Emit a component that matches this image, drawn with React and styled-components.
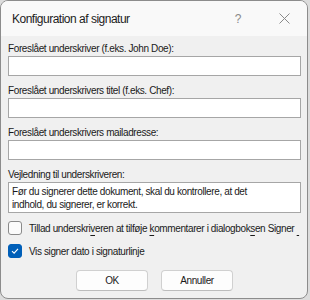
import styled, { createGlobalStyle } from "styled-components";

const Global = createGlobalStyle`
  html, body {
    margin: 0;
    padding: 0;
    background: #dcdcdc;
  }
  body {
    font-family: "Liberation Sans", Arial, sans-serif;
    color: #1a1a1a;
    letter-spacing: -0.38px;
  }
`;

const Window = styled.div`
  box-sizing: border-box;
  width: 308px;
  height: 299px;
  border: 1px solid #8c8c8c;
  border-radius: 8px;
  background: #f0f0f0;
  overflow: hidden;
  display: flex;
  flex-direction: column;
`;

const TitleBar = styled.div`
  height: 35px;
  background: #f9f9f9;
  display: flex;
  align-items: center;
  padding-left: 11px;
  flex-shrink: 0;
`;

const Title = styled.div`
  flex: 1;
  font-size: 12px;
  letter-spacing: -0.5px;
  color: #1c1c1c;
`;

const TitleButton = styled.div`
  width: 46px;
  height: 30px;
  display: flex;
  align-items: center;
  justify-content: center;
  color: #8a8a8a;
  font-size: 12px;
`;

const Body = styled.div`
  padding: 7px 6px 0 7px;
  display: flex;
  flex-direction: column;
`;

const Field = styled.div`
  display: flex;
  flex-direction: column;
  margin-bottom: 9px;
`;

const Label = styled.label`
  font-size: 10px;
  line-height: 12px;
  margin-bottom: 1px;
  color: #1a1a1a;
`;

const Input = styled.div`
  box-sizing: border-box;
  height: 20px;
  background: #fff;
  border: 1px solid #a6a6a6;
`;

const TextArea = styled.div`
  box-sizing: border-box;
  height: 31px;
  background: #fff;
  border: 1px solid #a6a6a6;
  padding: 3px 3px;
  font-size: 10px;
  line-height: 12.5px;
  color: #1a1a1a;
`;

const CheckRow = styled.div`
  display: flex;
  align-items: center;
  gap: 7px;
  height: 14px;
  margin-top: ${(p) => p.$top}px;
  font-size: 10px;
  white-space: nowrap;
`;

const Box = styled.div`
  box-sizing: border-box;
  width: 14px;
  height: 14px;
  border-radius: 3px;
  flex-shrink: 0;
  display: flex;
  align-items: center;
  justify-content: center;
  border: 1px solid ${(p) => (p.$checked ? "#005fb8" : "#8a8a8a")};
  background: ${(p) => (p.$checked ? "#005fb8" : "#fbfbfb")};
`;

const Key = styled.span`
  text-decoration: underline;
  text-underline-offset: 3px;
  text-decoration-color: #1a1a1a;
`;

const Buttons = styled.div`
  display: flex;
  justify-content: center;
  gap: 13px;
  margin-top: 12px;
`;

const Button = styled.div`
  box-sizing: border-box;
  width: 72px;
  height: 21px;
  background: #fdfdfd;
  border: 1px solid #d0d0d0;
  border-bottom-color: #bcbcbc;
  border-radius: 4px;
  font-size: 10px;
  display: flex;
  align-items: center;
  justify-content: center;
  color: #1a1a1a;
`;

export default function App() {
  return (
    <>
      <Global />
      <Window>
        <TitleBar>
          <Title>Konfiguration af signatur</Title>
          <TitleButton>?</TitleButton>
          <TitleButton>
            <svg width="11" height="11" viewBox="0 0 11 11">
              <path d="M0.5 0.5 L10.5 10.5 M10.5 0.5 L0.5 10.5" stroke="#8a8a8a" strokeWidth="1" />
            </svg>
          </TitleButton>
        </TitleBar>
        <Body>
          <Field>
            <Label>Foreslået underskriver (f.eks. John Doe):</Label>
            <Input />
          </Field>
          <Field>
            <Label>Foreslået underskrivers titel (f.eks. Chef):</Label>
            <Input />
          </Field>
          <Field>
            <Label>Foreslået underskrivers mailadresse:</Label>
            <Input />
          </Field>
          <Field>
            <Label>Vejledning til underskriveren:</Label>
            <TextArea>
              Før du signerer dette dokument, skal du kontrollere, at det
              <br />
              indhold, du signerer, er korrekt.
            </TextArea>
          </Field>
          <CheckRow $top={-1}>
            <Box />
            <span>
              Tillad underskri<Key>v</Key>eren at tilføje <Key>k</Key>ommentarer i dialogbok<Key>s</Key>en Signer <Key>&nbsp;</Key>
            </span>
          </CheckRow>
          <CheckRow $top={9}>
            <Box $checked>
              <svg width="10" height="10" viewBox="0 0 10 10">
                <path d="M2 5.2 L4.1 7.2 L8 2.8" stroke="#fff" strokeWidth="1.1" fill="none" />
              </svg>
            </Box>
            <span>Vis signer dato i signaturlinje</span>
          </CheckRow>
          <Buttons>
            <Button>OK</Button>
            <Button>Annuller</Button>
          </Buttons>
        </Body>
      </Window>
    </>
  );
}
